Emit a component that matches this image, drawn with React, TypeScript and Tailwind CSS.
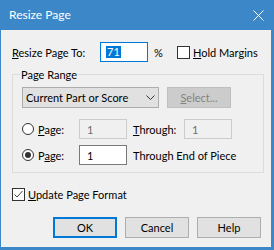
export default function App() {
  return (
    <div className="w-[274px] h-[250px] bg-[#3c87c8] flex flex-col font-[Lato,sans-serif] text-[11px] text-black leading-[15px] select-none">
      <div className="h-[30px] flex items-center pl-[9px] pr-[10px] text-white text-[12px] shrink-0">
        <span className="flex-1 -mt-[1px]">Resize Page</span>
        <svg width="11" height="11" viewBox="0 0 11 11">
          <path d="M0.5 0.5L10.5 10.5M10.5 0.5L0.5 10.5" stroke="white" strokeWidth="1" />
        </svg>
      </div>
      <div className="ml-[1px] mr-[3px] mb-[3px] flex-1 bg-[#f0f0f0] flex flex-col">
        <div className="mt-[12px] h-[20px] flex items-center pl-[11px]">
          <span className="w-[88px]">
            <u>R</u>esize Page To:
          </span>
          <div className="w-[48px] h-[20px] border border-[#0078d7] bg-white flex items-center pl-[5px]">
            <span className="bg-[#0078d7] text-white h-[12px] leading-[12px] px-[1px]">71</span>
          </div>
          <span className="ml-[6px] w-[23px]">%</span>
          <div className="w-[13px] h-[13px] border border-[#333333] bg-white" />
          <span className="ml-[3px]">
            <u>H</u>old Margins
          </span>
        </div>

        <div className="mt-[12px] ml-[11px] w-[252px] h-[99px] border border-[#dcdcdc] relative pt-[12px] pl-[9px]">
          <span className="absolute left-[7px] -top-[8px] px-[1px] bg-[#f0f0f0]">Page Range</span>
          <div className="flex gap-[8px] h-[21px]">
            <div className="w-[137px] h-[21px] border border-[#adadad] bg-[#e1e1e1] flex items-center justify-between pl-[3px] pr-[3px]">
              <span>Current Part or Score</span>
              <svg width="9" height="5" viewBox="0 0 9 5">
                <path d="M0.5 0.5L4.5 4.5L8.5 0.5" stroke="#333333" strokeWidth="1" fill="none" />
              </svg>
            </div>
            <div className="w-[64px] h-[21px] border border-[#bfbfbf] bg-[#cccccc] text-[#838383] flex items-center justify-center">
              <span>
                <u>S</u>elect...
              </span>
            </div>
          </div>
          <div className="mt-[11px] h-[20px] flex items-center">
            <div className="w-[12px] h-[12px] rounded-full border border-[#333333] bg-white" />
            <span className="ml-[4px] w-[41px]">
              <u>P</u>age:
            </span>
            <div className="w-[48px] h-[20px] border border-[#cccccc] bg-[#f0f0f0] text-[#6d6d6d] flex items-center pl-[7px]">
              1
            </div>
            <span className="ml-[6px] w-[51px]">
              <u>T</u>hrough:
            </span>
            <div className="w-[48px] h-[20px] border border-[#cccccc] bg-[#f0f0f0] text-[#6d6d6d] flex items-center pl-[7px]">
              1
            </div>
          </div>
          <div className="mt-[6px] h-[20px] flex items-center">
            <div className="w-[12px] h-[12px] rounded-full border border-[#333333] bg-white flex items-center justify-center">
              <div className="w-[6px] h-[6px] rounded-full bg-[#333333]" />
            </div>
            <span className="ml-[4px] w-[41px]">
              P<u>a</u>ge:
            </span>
            <div className="w-[48px] h-[20px] border border-[#7a7a7a] bg-white flex items-center pl-[7px]">1</div>
            <span className="ml-[6px]">Through End of Piece</span>
          </div>
        </div>

        <div className="mt-[15px] h-[13px] flex items-center pl-[11px]">
          <div className="w-[13px] h-[13px] border border-[#333333] bg-white flex items-center justify-center">
            <svg width="11" height="11" viewBox="0 0 11 11">
              <path d="M1.5 5.5L4 8L9.5 2" stroke="#444444" strokeWidth="1" fill="none" />
            </svg>
          </div>
          <span className="ml-[3px]">
            <u>U</u>pdate Page Format
          </span>
        </div>

        <div className="mt-[16px] flex justify-end pr-[10px] gap-[8px]">
          <div className="w-[64px] h-[21px] border-2 border-[#0078d7] bg-[#e1e1e1] flex items-center justify-center">OK</div>
          <div className="w-[64px] h-[21px] border border-[#adadad] bg-[#e1e1e1] flex items-center justify-center">Cancel</div>
          <div className="w-[64px] h-[21px] border border-[#adadad] bg-[#e1e1e1] flex items-center justify-center">Help</div>
        </div>
      </div>
    </div>
  );
}
